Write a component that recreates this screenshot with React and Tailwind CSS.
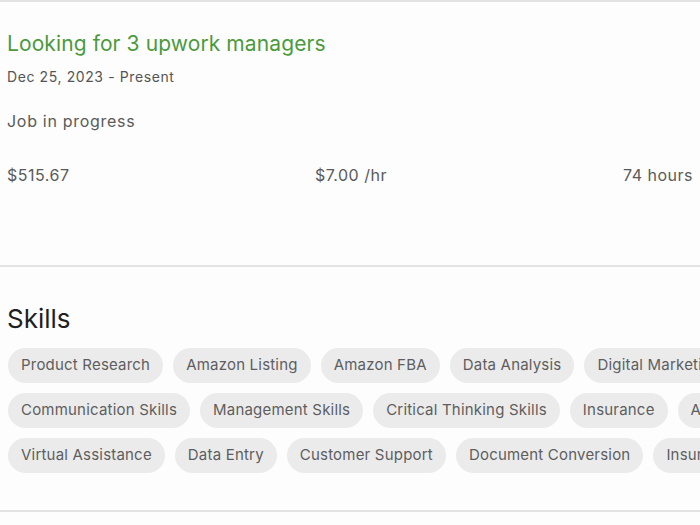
const rows = [
  ["Product Research", "Amazon Listing", "Amazon FBA", "Data Analysis", "Digital Marketing"],
  ["Communication Skills", "Management Skills", "Critical Thinking Skills", "Insurance", "Administrative Support"],
  ["Virtual Assistance", "Data Entry", "Customer Support", "Document Conversion", "Insurance Claim"],
];

export default function App() {
  return (
    <main
      className="w-[700px] h-[525px] overflow-hidden bg-[#fdfdfd] text-[#5b5b5b]"
      style={{ fontFamily: "Inter, 'Liberation Sans', sans-serif" }}
    >
      <div className="border-t-2 border-[#e3e3e3]" />

      {/* Job summary */}
      <section className="pl-[7px] pt-[28px] h-[265px] border-b-2 border-[#e3e3e3]">
        <h1 className="text-[21px] leading-[28px] text-[#4b9a3d] tracking-[0.1px]">
          Looking for 3 upwork managers
        </h1>
        <p className="mt-[9px] text-[14px] leading-[20px] text-[#555] tracking-[0.6px]">
          Dec 25, 2023 - Present
        </p>
        <p className="mt-[22px] text-[16px] leading-[24px] text-[#5a5a5a] tracking-[0.7px]">
          Job in progress
        </p>
        <div className="mt-[30px] flex text-[16px] leading-[24px] text-[#5a5a5a] tracking-[0.5px] whitespace-nowrap">
          <span className="w-[308px]">$515.67</span>
          <span className="w-[308px]">$7.00 /hr</span>
          <span>74 hours</span>
        </div>
      </section>

      {/* Skills */}
      <section className="pl-[8px] pt-[36px] h-[245px] border-b-2 border-[#e3e3e3]">
        <h2 className="-ml-[1px] text-[26px] leading-[32px] text-[#1f1f1f]">Skills</h2>
        <div className="mt-[13px] flex flex-col gap-[10px]">
          {rows.map((row, i) => (
            <div key={i} className="flex gap-[10px] whitespace-nowrap">
              {row.map((skill) => (
                <span
                  key={skill}
                  className="h-[35px] px-[13px] flex items-center rounded-full bg-[#ebebec] text-[15px] tracking-[0.2px] text-[#5e5e5e]"
                >
                  {skill}
                </span>
              ))}
            </div>
          ))}
        </div>
      </section>
    </main>
  );
}
